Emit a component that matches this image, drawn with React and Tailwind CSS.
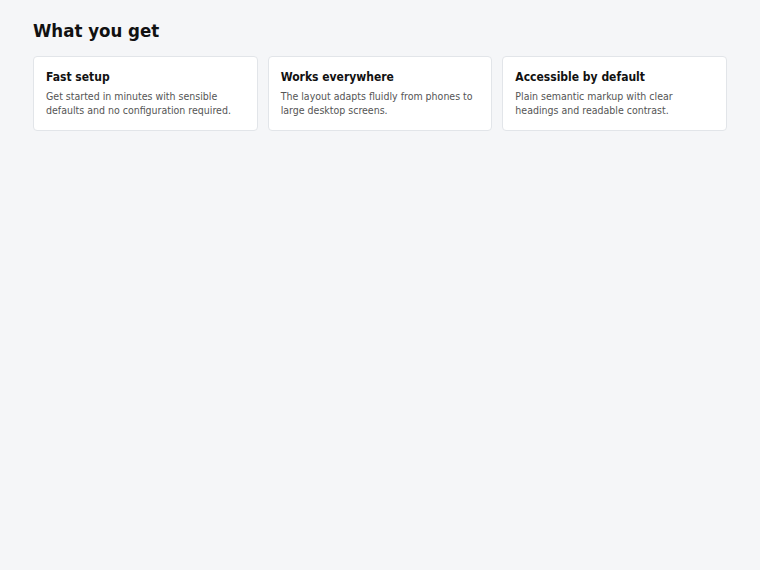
const features = [
  {
    title: 'Fast setup',
    body: 'Get started in minutes with sensible defaults and no configuration required.',
  },
  {
    title: 'Works everywhere',
    body: 'The layout adapts fluidly from phones to large desktop screens.',
  },
  {
    title: 'Accessible by default',
    body: 'Plain semantic markup with clear headings and readable contrast.',
  },
];

export default function App() {
  return (
    <div className="min-h-screen bg-[#f5f6f8] px-[33px] pt-[19px] font-['DejaVu_Sans_Condensed','DejaVu_Sans',sans-serif] text-[#111]">
      <h1 className="text-[18.5px] leading-6 font-bold">What you get</h1>
      <div className="mt-[13px] grid grid-cols-3 gap-[10px]">
        {features.map((f) => (
          <div
            key={f.title}
            className="rounded border border-[#e2e5e9] bg-white px-3 pt-3 pb-[13px]"
          >
            <h2 className="text-[12px] leading-4 font-bold">{f.title}</h2>
            <p className="mt-1 text-[10.5px] leading-[14px] text-[#555]">{f.body}</p>
          </div>
        ))}
      </div>
    </div>
  );
}
